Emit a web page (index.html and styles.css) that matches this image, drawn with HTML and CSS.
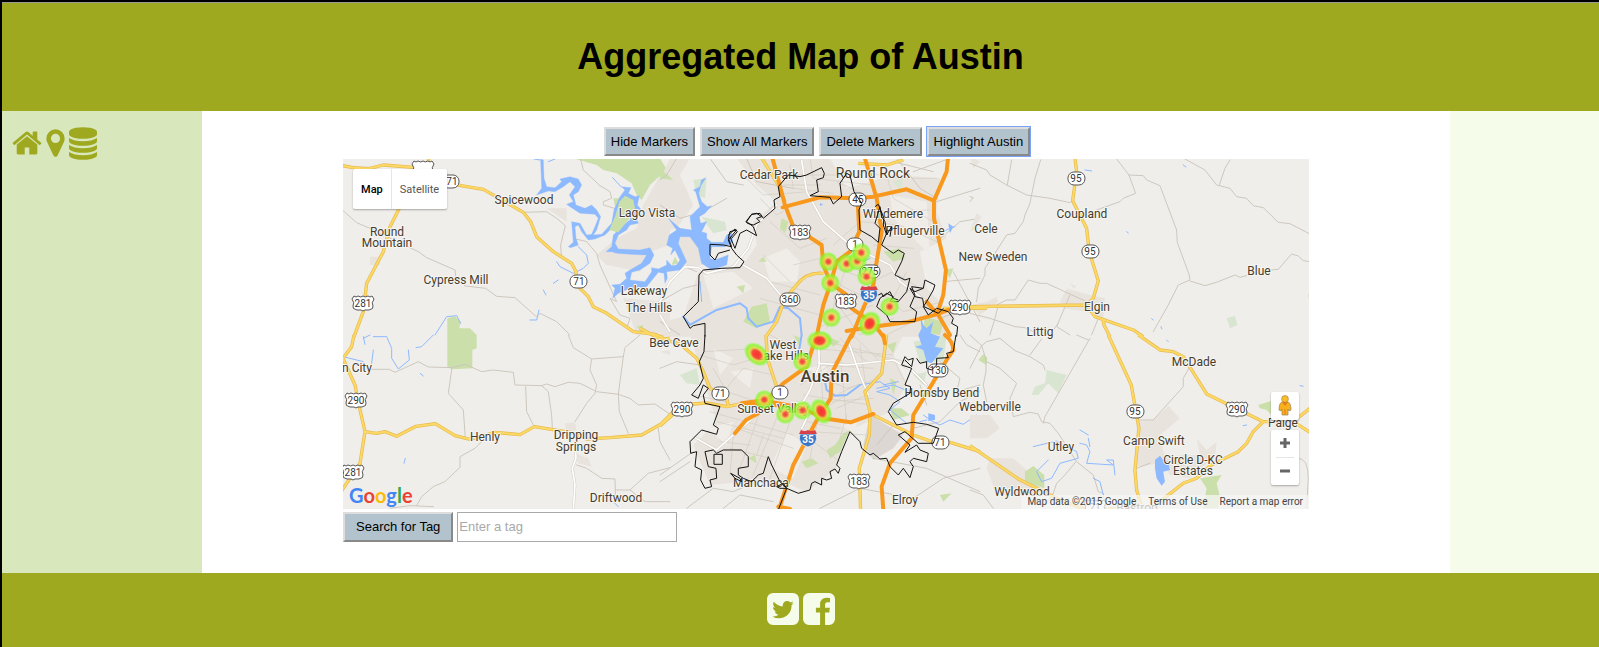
FILE: index.html
```html
<!DOCTYPE html>
<html lang="en">
<head>
<meta charset="utf-8">
<title>Aggregated Map of Austin</title>
<link rel="stylesheet" href="styles.css">
</head>
<body>
<div class="page">
<header class="header"><h1 class="title">Aggregated Map of Austin</h1></header>
<div class="columns">
  <nav class="sidebar" aria-label="Main">
    <a href="#home" aria-label="Home"><svg class="icon" width="30" height="32" viewBox="64 0 1664 1792"><path d="M1472 992v480q0 26-19 45t-45 19h-384v-384h-256v384h-384q-26 0-45-19t-19-45v-480q0-1 .5-3t.5-3l575-474 575 474q1 2 1 6zm223-69l-62 74q-8 9-21 11h-3q-13 0-21-7l-692-577-692 577q-12 8-24 7-13-2-21-11l-62-74q-8-10-7-23.5t11-21.5l719-599q32-26 76-26t76 26l244 204v-195q0-14 9-23t23-9h192q14 0 23 9t9 23v408l219 182q10 8 11 21.5t-7 23.5z"/></svg></a>
    <a href="#map" aria-label="Map"><svg class="icon" width="19" height="32" viewBox="384 0 1024 1792"><path d="M1152 640q0-106-75-181t-181-75-181 75-75 181 75 181 181 75 181-75 75-181zm256 0q0 109-33 179l-364 774q-16 33-47.5 52t-67.5 19-67.5-19-46.5-52l-365-774q-33-70-33-179 0-212 150-362t362-150 362 150 150 362z"/></svg></a>
    <a href="#data" aria-label="Data"><svg class="icon" width="28" height="33" viewBox="128 0 1536 1792"><path d="M896 768q237 0 443-43t325-127v170q0 69-103 128t-280 93.5-385 34.5-385-34.5-280-93.5-103-128v-170q119 84 325 127t443 43zm0 768q237 0 443-43t325-127v170q0 69-103 128t-280 93.5-385 34.5-385-34.5-280-93.5-103-128v-170q119 84 325 127t443 43zm0-384q237 0 443-43t325-127v170q0 69-103 128t-280 93.5-385 34.5-385-34.5-280-93.5-103-128v-170q119 84 325 127t443 43zm0-1152q208 0 385 34.5t280 93.5 103 128v128q0 69-103 128t-280 93.5-385 34.5-385-34.5-280-93.5-103-128v-128q0-69 103-128t280-93.5 385-34.5z"/></svg></a>
  </nav>
  <main class="main">
    <div class="toolbar">
      <button type="button" class="btn">Hide Markers</button>
      <button type="button" class="btn">Show All Markers</button>
      <button type="button" class="btn">Delete Markers</button>
      <button type="button" class="btn btn-active">Highlight Austin</button>
    </div>
    <section class="map" aria-label="Map of Austin">
<svg class="canvas" viewBox="0 0 966 350" preserveAspectRatio="xMidYMid slice">
<defs>
<radialGradient id="heat"><stop offset="0" stop-color="#f23c3c"/><stop offset=".2" stop-color="#f4583e" stop-opacity=".95"/><stop offset=".42" stop-color="#e6dc46" stop-opacity=".85"/><stop offset=".64" stop-color="#a6f03c" stop-opacity=".8"/><stop offset=".78" stop-color="#7dfa1e" stop-opacity=".75"/><stop offset="1" stop-color="#7dff1e" stop-opacity="0"/></radialGradient>
<radialGradient id="hot"><stop offset="0" stop-color="#fa3030"/><stop offset=".34" stop-color="#f84434" stop-opacity=".95"/><stop offset=".54" stop-color="#dce03c" stop-opacity=".85"/><stop offset=".78" stop-color="#7dfa1e" stop-opacity=".8"/><stop offset="1" stop-color="#7dff1e" stop-opacity="0"/></radialGradient>
<path id="us" d="M-9-7Q-7-5-5-7-2-5 0-7 2-5 5-7 7-5 9-7L11-4Q8 0 10 3 11 6 6 7H2L0 8-2 7H-6Q-11 6-10 3-8 0-11-4Z"/>
<g id="interstate"><path fill="#3a76c4" stroke="#fff" stroke-width=".7" d="M-8-4H8Q11 6 0 9-11 6-8-4Z"/><path fill="#d8414a" d="M-7-8Q-3-6 0-8 3-6 7-8L9-4H-9Z"/></g>
<g id="yellow">
<path transform="translate(-3 -4) scale(.33333)" d="M0 30Q40 42 90 40L130 30 220 37 262 28 270 0M340 88L430 103 550 172 572 200 590 245 640 290 695 325 708 350 710 390 745 425 760 455 800 475 880 530 945 538 970 548M178 160L150 215 130 290 80 385 70 470 42 545"/>
<path transform="translate(-3 176) scale(.33333)" d="M42 0L35 35 9 70 45 150 60 225 75 290 60 385 30 430 0 475M75 290L110 295 135 290 170 304 228 274 286 266 345 302 390 313 465 292 540 299 583 275 690 292 740 312 810 308 905 300 962 268 1000 230M900-20L960 12 990 10"/>
<path transform="translate(317 -4) scale(.33333)" d="M300 0L355 90 375 140M490 355Q440 350 410 390L375 430 350 500 318 545M595 25L680 30 730 15M850 460H980"/>
<path transform="translate(317 176) scale(.33333)" d="M318 0L322 70 350 155 330 205M0 273L65 215 100 207 140 204 200 215 250 205M0 15Q60 20 75 40L110 70 130 110 150 160 200 190 205 215M680 0L665 115 615 170 630 230 628 300 598 400 602 530M640 240L760 300 830 325 870 322 960 350"/>
<path transform="translate(627 -4) scale(.33333)" d="M314 0L320 50 308 137 350 220 358 290 385 378 370 430 350 450 0 455M350 450L375 485 490 525 520 545M400 495L402 510 420 545"/>
<path transform="translate(627 176) scale(.33333)" d="M415 0L484 150 507 280 495 405 500 465 520 530M505 0L570 45 610 50 640 65 710 177 880 260 850 290 830 325 805 350 720 392 680 430 640 445 570 500 530 530M880 260H970L1020 292M970 260L1020 220M0 332L145 432 260 490 350 525 440 522 520 530"/>
</g>
</defs>
<rect width="966" height="350" fill="#f0eeea"/>
<g class="tile" transform="translate(-3 -4) scale(.33333)">
<path class="urban" d="M960 62L990 75V270L930 290 900 350 800 330 770 300 830 250 890 220 910 150ZM90 305H120V330H90ZM620 160L680 160 680 200ZM850 430L990 440V530L890 540Z"/>
<path class="park" d="M700 10L960 10 985 50 985 75 960 62 930 90 905 135 890 120 875 85 860 75 830 55 790 45 770 30ZM820 130L870 130 885 160 860 195 830 232 808 222 830 180ZM322 540V490L345 484 362 500 358 520 390 520 410 540ZM890 515L910 510 905 530Z"/>
<path class="minor" d="M9 167L50 203 90 220 235 290 260 308 345 345 347 365 375 393 437 400 470 424 525 428 590 486 600 475 650 500 690 540M550 172L620 170 650 190 676 212 662 270 664 300M722 13L730 45 780 92 810 110 815 130 790 140 790 150 840 165M700 250L740 260 770 295 780 330 830 440 810 430 840 480 870 490 860 520 880 530"/>
<path class="creek" d="M285 540L320 485 350 482 362 505M650 320L660 335 700 355 730 340 745 325 740 300 715 275M570 495L590 495 597 465M640 385L655 375M610 405L618 420"/>
</g>
<g class="tile" transform="translate(-3 176) scale(.33333)">
<path class="park" d="M322 0H410V40L397 45V100L336 103 322 95Z"/>
<path class="urban" d="M675 265L705 262 710 285 680 290ZM705 355L745 370 755 395 715 385ZM960 50L990 45V60Z"/>
<path class="minor" d="M95 103H148L165 112 235 80 265 96 336 98 376 88 425 110 458 105 520 112 525 150 605 152 620 147 645 155 685 142 720 145 770 170 835 178 870 190 895 210 945 207 990 238M336 98L325 175 370 225 376 310M557 155L560 230 580 270M605 152L625 170 635 240 637 280M685 0L700 38 755 72 750 105 770 150 765 175 740 205 705 260M755 72L850 65 835 178 838 230 865 295M850 65L855 38 900 0M425 320L405 340 360 365V397L315 440 280 455 245 485 230 512M150 520L210 512 280 515M710 390L740 400 785 430 825 432 827 500M830 465H870L925 415 990 398M870 465L915 500H990M955 280L960 320 990 375"/>
<path class="creek" d="M70 10L90 0M100 5H140L155 40 155 70 175 102 208 75 205 45M75 28L70 5M9 65L70 80M100 45L95 85M192 385L196 370M228 38L245 35 280 0M240 115L250 123M820 500L835 515"/>
<path class="white-edge" d="M705 310L708 370 697 400 705 450 700 525"/><path class="white" d="M705 310L708 370 697 400 705 450 700 525"/>
</g>
<g class="tile" transform="translate(317 -4) scale(.33333)">
<path class="urban" d="M230 10H510L560 100 700 60 840 70 830 170 860 250 780 290 800 400 880 480 860 545H0L10 500 70 485 115 350 250 330 290 270 280 200 350 140 290 90ZM0 75L30 10H90L60 60 100 150 50 220 0 230ZM45 245L105 240 140 280 150 325 80 340 70 300Z"/>
<path class="pale" d="M380 280L420 320 410 380 330 380 310 310ZM130 360L220 350 280 400 160 460ZM690 120L800 140 810 300 700 190Z"/>
<path class="park" d="M0 40L40 75 0 70ZM275 455L320 445 330 500 290 520 250 500ZM365 190L385 200 375 235 360 220ZM310 305L320 320 295 320ZM670 290L720 280 735 310 700 320ZM795 485L850 500 840 540 790 530ZM540 420L560 410 565 440ZM855 345L880 340 870 370ZM230 395L255 390 250 415ZM45 305L55 325 35 330Z"/>
<path class="pale-green" d="M100 75L140 70 135 130 110 120ZM125 185L195 200 200 225 160 235ZM700 80L730 70 720 105Z"/>
<path class="street" d="M300 130L350 180 370 170M240 50L310 120 450 110M390 30L400 100 520 115M450 10L460 70 640 90M360 60H540M370 90H480M530 80L640 130 680 120M600 50L720 70 830 70M650 170L810 165M680 60L700 130 820 200M600 200L720 210 830 260M520 270L600 200M400 330L480 310M330 200L420 280 500 250M310 300L390 380M330 380L480 420M530 340L640 380 700 350 780 400M540 390L620 430M560 330L500 520M650 400L730 470 850 440M640 270L760 280M740 350L700 430M300 430L480 480M470 520L640 450M520 430L600 540M600 540L700 490M680 540L800 480"/>
<path class="minor" d="M0 150L60 190 130 170 200 130M50 10L20 60 0 75M150 10L200 80 250 90M0 350L60 330 110 350M0 500L60 540M260 10L290 80 400 100M760 50L870 10M830 140L960 100M830 260L900 200 960 190M850 380L960 370M700 20L820 50M710 10L780 100 830 130M0 440L70 400 110 390M840 490L920 460M880 350L960 500"/>
<path class="river" d="M70 485L90 510 170 465 240 445 260 460 265 490 290 515 340 500 360 455 385 460 420 490 425 540"/>
<path fill="#8db9ff" d="M865 205L880 215 870 235ZM480 145L490 148 480 153Z"/>
<path class="creek" d="M850 230L870 220 885 215M125 440L120 380M630 310L610 320"/>
<path class="white-edge" d="M425 15L440 110 490 200 570 270 690 330 720 380 800 440M0 480L30 530M0 440L30 380 75 335 115 338 140 355 220 335 265 280 290 210 350 150M250 330L320 370 370 430"/><path class="white" d="M425 15L440 110 490 200 570 270 690 330 720 380 800 440M0 480L30 530M0 440L30 380 75 335 115 338 140 355 220 335 265 280 290 210 350 150M250 330L320 370 370 430"/>
</g>
<g class="tile" transform="translate(187 -4) scale(.33333)">
<path fill="#8db9ff" stroke="#8db9ff" stroke-width="1" d="M32 12L40 15 42 70 50 95 75 98 95 80 90 72 120 65 145 72 155 90 145 110 130 120 138 150 165 160 185 150 200 165 212 185 200 225 190 240 215 238 245 205 252 165 270 125 285 105 275 95 303 98 295 115 315 125 328 122 322 150 335 165 318 185 325 205 300 210 290 225 265 240 255 265 265 282 330 285 360 278 372 300 360 325 330 345 305 352 300 375 345 380 365 350 365 338 385 342 410 330 410 315 425 332 440 330 450 315 435 285 422 300 428 280 410 270 418 240 440 225 415 190 450 220 485 225 480 185 495 170 510 155 497 110 490 105 510 95 514 75 528 68 514 90 506 115 515 140 532 155 545 152 525 175 508 185 512 205 530 200 515 230 530 235 530 250 545 262 580 262 590 240 605 235 608 262 585 275 545 275 540 310 555 315 595 300 590 330 545 345 515 325 505 280 480 245 450 245 445 265 470 320 450 345 410 350 412 370 405 385 402 355 385 352 350 395 320 402 300 400 265 415 248 430 255 400 245 390 270 388 290 370 285 355 300 345 335 325 350 300 300 298 260 295 245 290 228 290 245 275 250 240 280 210 300 195 305 170 300 140 290 125 270 155 262 190 245 220 225 240 195 252 175 255 155 230 145 210 135 215 138 250 145 270 122 278 115 275 130 262 125 200 150 205 170 240 185 238 195 215 205 190 195 178 150 175 120 155 110 148 130 140 118 120 135 95 120 80 100 95 75 110 55 108 20 120 35 100Z"/>
<path class="park" d="M268 140L285 122 310 135 315 160 295 195 265 232 238 225 255 185Z"/>
<path class="creek" d="M275 97L248 68M12 12L30 15M55 20L75 12"/>
</g>
<g class="tile" transform="translate(317 176) scale(.33333)">
<path class="urban" d="M90 0H730L700 60 740 150 690 230 560 290 530 400 440 470 370 440 250 440 150 450 100 330 170 260 130 130Z"/>
<path fill="#dcd7d2" d="M630 240L730 300 700 340 640 375 610 330Z"/>
<path class="pale" d="M160 40L220 70 180 120ZM210 110L280 100 270 160ZM330 400L380 290 440 330 400 430ZM140 280L220 260 200 330ZM440 100L500 90 500 130ZM540 270L590 260 590 300Z"/>
<path class="pale-green" d="M60 120L110 100 120 150 80 145ZM760 20L860 0 850 80 780 80ZM760 120L800 110 790 150Z"/>
<path class="park" d="M500 345L525 330 550 295 570 285 540 350 510 370ZM425 380L455 370 475 385 440 400ZM490 0L540 20 520 35ZM265 370L285 360 290 385ZM680 30L710 20 700 55ZM690 220L725 220 750 240 700 255ZM690 130L710 140 700 180ZM400 0L425 10 415 30ZM840 480L875 475 850 500Z"/>
<path class="street" d="M150 230L400 300M170 260L370 310M230 280L400 340M300 230L240 400M350 250L280 420M390 260L330 430M210 340L330 370M120 60L220 90 320 60M190 170L250 100 340 120M480 90L640 100M450 40L700 60M480 60L490 220M540 50L560 260M600 30L620 170M420 100L560 160 660 130M500 200L640 190M430 180L630 210M450 290L620 300M470 270L450 370M560 240L540 310M700 70L740 150M640 60L740 80M460 320L540 380M130 50L300 40M160 100L200 170 290 200M420 150L540 70M510 190L590 150M530 220L620 180M460 240L560 180M440 260L540 280M330 0L410 40M500 20L660 60M540 10L620 80M580 0L660 80M100 180L200 200M220 300L210 420M180 320L270 330M310 300L290 360"/>
<path class="minor" d="M0 440L90 380M0 420L100 350M80 520L160 460 220 470 290 440M190 520L240 480 340 500M480 520L600 460 760 490 850 430 960 400M640 370L800 400 960 470M760 280L840 260 900 200 960 170M800 210L780 150M840 80L900 130 890 170 960 150M900 0L920 30 960 50M0 100L50 80 120 90M700 270L650 330"/>
<path class="creek" d="M790 240L815 258 840 270 870 255 910 268 950 240M780 260L800 255M650 160L700 150 750 170M670 150L715 140"/>
<path class="creek" d="M600 150L660 140 690 160 650 170 690 180 720 200 690 225 740 265"/>
<path class="river" d="M425 0L415 60M495 140L500 165 525 182 560 180 600 150"/>
<path fill="#8db9ff" d="M780-60L790-30 800-20 820-40 812-5 840 5 825 35 850 40 815 85 800 80 790 45 765 35 785 30 775 0 785-20ZM805 235L825 240 825 255 805 258Z"/>
<path class="white-edge" d="M475 0L478 90 450 165 430 200 385 210M475 85L560 90 700 75 755 105 800 150M565 20L600 120 625 180M105 308L170 345 228 292 290 240M445 240L425 280"/><path class="white" d="M475 0L478 90 450 165 430 200 385 210M475 85L560 90 700 75 755 105 800 150M565 20L600 120 625 180M105 308L170 345 228 292 290 240M445 240L425 280"/>
</g>
<g class="tile" transform="translate(627 -4) scale(.33333)">
<path class="urban" d="M0 0L30 20 10 40ZM0 230L20 175 35 185 10 225ZM290 400L360 420 405 430 400 490 350 470 280 460 270 440ZM0 450L50 440 80 425 85 440 30 480ZM300 385L320 395 310 400ZM1014 415H1018V430H1014Z"/>
<path class="pale-green" d="M770 490L795 482 802 510 780 520Z"/>
<path class="minor" d="M0 25L50 45 60 60 110 90 170 120 240 130 300 143 308 137M125 15L112 90M212 15L195 70 185 120 180 145 165 180 160 200 135 235 110 240 75 295 45 340 45 360 25 400 20 440M380 165L450 140 460 130 497 115 477 60 440 12M477 60L520 62 530 75 570 92 620 225 622 262 658 360 660 375 625 390 595 450 550 530M660 378L705 392 740 382 795 360 810 367 830 362M905 345L925 343 965 297 985 303 1000 317 1020 320M645 12L705 45 740 90 780 100 800 125 830 130 850 152 880 158 925 202 960 206 1020 237M780 15L765 40 748 90M0 475L60 490 135 515 165 518 210 540M80 450L110 435H135L175 375 210 385 230 385 350 440M85 450L75 490 60 540M300 420L260 515 300 540M265 505L250 525M385 490L365 540M0 125L10 128 0 140"/>
<path class="creek" d="M345 45L365 48M470 230L475 234M640 30L648 36M545 491L550 495M573 515L576 522"/>
</g>
<g class="tile" transform="translate(627 176) scale(.33333)">
<path class="urban" d="M500 260L550 255 595 212 630 250 570 300 580 350 600 380 500 395ZM60 370L130 370 210 440 200 480 80 480 50 400ZM0 240L60 240 90 280 50 310 0 310ZM680 310L710 345 740 320 735 370 690 400 660 430 600 420 570 370 640 360 690 360Z"/>
<path class="park" d="M165 410L190 393 223 420 223 460 165 440ZM25 75L40 57 52 68 50 90ZM690 430L755 420 740 445 750 485 745 520H700L710 460ZM865 210L905 197V240L890 225 870 220Z"/>
<path class="pale-green" d="M230 105L290 120 265 175 235 145 205 180 185 180 195 155 225 145Z"/>
<path class="minor" d="M0 0L35 32 0 100M35 32L50 20 90 10 135 47 180 65 220 90 225 105M35 32L50 80 90 100 140 145 120 190 130 245 180 232 205 237 215 260 240 265 265 295 320 380 370 420 385 470 400 475 408 525M180 60L215 12M220 265L225 245 360 10M320 0L355 15M48 80V110L40 150 50 200M500 255L550 255 640 155 640 130 660 95M318 380L285 420 260 445 250 475 225 510M0 465L40 480 70 520M500 400L540 385M985 370Q1015 370 1015 430L1010 520"/>
<path class="creek" d="M190 335L260 318 320 350 325 370 270 385 245 430 215 440 200 410 235 375M330 285L355 300M330 325L350 330 360 350 350 385 430 390 410 375 430 375 435 420M370 430L390 440 400 480M360 335L355 310M590 15L595 20M990 152L1000 154M820 272L830 270M890 500L895 490"/>
<path fill="#8db9ff" d="M555 375L570 362 580 375 595 380 600 405 580 410 585 440 575 452 560 430 555 400Z"/>
</g>
<use href="#yellow" class="yellow-edge"/><use href="#yellow" class="yellow-line"/>
<g transform="translate(317 -4) scale(.33333)" class="orange">
<path d="M335 0L375 150 400 215 485 270 490 330 512 385 560 420 575 460M575 460L640 505 670 545M368 157L480 127 590 130 640 125 740 103 822 137M612 0L650 130 665 230 650 320 640 390 610 460 575 545M592 120L598 230 570 290 530 320 512 385 490 450 470 545M865 0L860 50 822 137V190L858 345 850 420 832 475 870 540M560 528L640 515 740 502 830 478 865 465M800 440L832 478"/>
</g>
<g transform="translate(317 176) scale(.33333)" class="orange">
<path d="M470 0L440 95 370 145 320 195 245 205M574 0L515 115 512 190 465 265 400 390 355 530M670 0L675 25M855 0Q880 20 880 45L860 75 760 240 755 310 690 385 665 455 670 525M330 200L430 220 490 250 572 262 640 237M225 295L258 255 295 235 310 215M250 205L340 210 420 215M355 515L390 522"/>
</g>
<g transform="translate(-343 -159)">
<g class="shield">
<use href="#us" x="423" y="168"/><use href="#us" x="363" y="303"/><use href="#us" x="356" y="400"/><use href="#us" x="353" y="472"/><use href="#us" x="800" y="232"/><use href="#us" x="846" y="301"/><use href="#us" x="859" y="481"/><use href="#us" x="960" y="307"/><use href="#us" x="682" y="409"/><use href="#us" x="1237" y="409"/><use href="#us" x="1095" y="507"/>
<rect x="442" y="175" width="17" height="13" rx="6"/><rect x="570" y="275" width="17" height="13" rx="6"/><rect x="780" y="293" width="20" height="13" rx="6"/><rect x="847" y="238" width="16" height="13" rx="6"/><rect x="849" y="193" width="17" height="13" rx="6"/><rect x="860" y="265" width="20" height="13" rx="6"/><rect x="712" y="387" width="17" height="13" rx="6"/><rect x="772" y="386" width="16" height="13" rx="6"/><rect x="928" y="364" width="20" height="13" rx="6"/><rect x="932" y="436" width="17" height="13" rx="6"/><rect x="1068" y="172" width="17" height="13" rx="6"/><rect x="1082" y="245" width="17" height="13" rx="6"/><rect x="1127" y="405" width="17" height="13" rx="6"/>
</g>
<use href="#interstate" x="869" y="294"/><use href="#interstate" x="808" y="438"/>
<g class="number">
<text x="363" y="307">281</text><text x="356" y="404">290</text><text x="353" y="476">281</text><text x="800" y="236">183</text><text x="846" y="305">183</text><text x="859" y="485">183</text><text x="960" y="311">290</text><text x="682" y="413">290</text><text x="1237" y="413">290</text><text x="452" y="185">71</text><text x="579" y="285">71</text><text x="790" y="303">360</text><text x="855" y="248">1</text><text x="858" y="203">45</text><text x="870" y="275">275</text><text x="720" y="397">71</text><text x="780" y="396">1</text><text x="938" y="374">130</text><text x="940" y="446">71</text><text x="1076" y="182">95</text><text x="1090" y="255">95</text><text x="1135" y="415">95</text><text x="1095" y="511">21</text>
<text class="number-light" x="869" y="299">35</text><text class="number-light" x="808" y="443">35</text>
</g>
<g class="label">
<text x="524" y="204">Spicewood</text><text x="387" y="236">Round</text><text x="387" y="247">Mountain</text><text x="647" y="217">Lago Vista</text><text x="456" y="284">Cypress Mill</text><text x="644" y="295">Lakeway</text><text x="649" y="312">The Hills</text><text x="674" y="347">Bee Cave</text><text x="357" y="372">n City</text><text x="485" y="441">Henly</text><text x="576" y="439">Dripping</text><text x="576" y="451">Springs</text><text x="616" y="502">Driftwood</text><text x="769" y="179">Cedar Park</text><text class="label-town" x="873" y="178">Round Rock</text><text x="893" y="218">Windemere</text><text x="915" y="235">Pflugerville</text><text x="986" y="233">Cele</text><text x="993" y="261">New Sweden</text><text x="1082" y="218">Coupland</text><text x="1259" y="275">Blue</text><text x="1097" y="311">Elgin</text><text x="1040" y="336">Littig</text><text x="1194" y="366">McDade</text><text x="783" y="349">West</text><text x="783" y="360">Lake Hills</text><text class="label-city" x="825" y="382">Austin</text><text x="942" y="397">Hornsby Bend</text><text x="990" y="411">Webberville</text><text x="773" y="413">Sunset Valley</text><text x="761" y="487">Manchaca</text><text x="905" y="504">Elroy</text><text x="1061" y="451">Utley</text><text x="1154" y="445">Camp Swift</text><text x="1193" y="464">Circle D-KC</text><text x="1193" y="475">Estates</text><text x="1022" y="496">Wyldwood</text><text x="1283" y="427">Paige</text><text x="1137" y="512">Bastrop</text>
</g>
</g>
<g class="boundary" transform="translate(317 -4) scale(.33333)">
<path d="M135 545L135 505 100 512 90 520 70 485 100 455 115 440 117 360 130 345 185 340 240 338 252 320 230 300 215 280 205 255 230 225 210 230 205 250 215 275 190 270 150 268 150 300 165 315 175 295 210 285M210 245L225 280 240 235 260 225 290 242 280 215 260 200 275 178 300 175 310 190 345 160 342 135 360 125 355 95 385 60 420 65 440 60 485 38 493 55 490 68 470 75 475 110 450 122 510 127 520 147 545 125 540 85 560 55 570 60 582 110 605 145 597 165 600 225 635 245 655 262 660 220 645 205 660 155 665 185 675 200 680 235 665 270 700 295 715 285 733 295 725 320 705 360 735 375 750 370 740 410 715 440 690 440 700 425 680 415 660 430 650 455 680 480 690 500 765 500 770 470 750 455 765 420 755 395 790 400 795 375 825 390 820 405 800 440 790 455 805 480 830 460 865 470 880 490 875 505 893 515 890 545"/>
<path d="M258 200L275 178 290 175 305 185 290 190 300 200 280 210 262 205ZM205 240L225 222 232 230 215 250M645 155L655 148 660 160 672 190 670 210 680 240 695 215 690 245M790 400L765 410 750 400 765 425 788 430 792 455 835 475 850 460M655 420L665 415 670 425 690 410 700 430 715 435"/>
</g>
<g class="boundary" transform="translate(317 176) scale(.33333)">
<path d="M135 0L132 50 118 80 130 130 120 150 95 180 115 190 130 150 145 160 130 180 135 205 180 215 160 270 175 280 170 298 125 285 90 320 92 355 110 350 105 395 125 405 122 435 135 460 155 455 150 435 170 430 168 400 145 395 135 350 160 345 170 355 190 345 245 345 265 365 265 395 235 400 235 420 250 430 275 440 295 420 310 415 325 365 335 390 360 440 380 460 415 475 450 465 455 445 465 440 485 450 485 430 500 435 515 430 510 410 525 402 535 415 540 400 530 390 545 350 570 290 600 320 605 340 630 360 640 355 660 372 680 370 690 395 715 420 730 400 750 428 760 395 750 380 760 370 800 380 805 355 780 345 770 330 735 352 750 330 715 300 735 290 775 325 820 325 836 280 800 268 760 262 710 270 685 230 700 205 750 175 752 155 735 150 755 100 725 90 735 65 745 75 760 70 755 95 735 75M770 70L780 85 800 80 800 100 815 105 830 90 830 70 865 68 860 55 880 50 888 0"/>
<path d="M162 358H187V388H162ZM212 415L240 430 245 440 225 430ZM350 455L370 445 380 460 360 460ZM355 525L380 460"/>
</g>
<g transform="translate(317 -4) scale(.33333)" fill="url(#heat)">
<circle cx="505" cy="320" r="30"/><circle cx="560" cy="326" r="30"/><circle cx="592" cy="318" r="30"/><circle cx="604" cy="293" r="30"/><circle cx="620" cy="365" r="30"/><circle cx="511" cy="384" r="30"/><circle cx="514" cy="488" r="30"/><circle cx="689" cy="455" r="30"/>
<ellipse fill="url(#hot)" cx="629" cy="506" rx="33" ry="40" transform="rotate(30 629 506)"/>
<g transform="translate(0 540)"><circle cx="427" cy="80" r="30"/><circle cx="313" cy="194" r="30"/><circle cx="376" cy="238" r="30"/><circle cx="428" cy="226" r="30"/><ellipse fill="url(#hot)" cx="479" cy="17" rx="40" ry="31"/><ellipse fill="url(#hot)" cx="290" cy="58" rx="43" ry="31" transform="rotate(40 290 58)"/><ellipse fill="url(#hot)" cx="484" cy="229" rx="42" ry="30" transform="rotate(60 484 229)"/></g>
</g>
</svg>
      <div class="map-type"><button type="button" class="type type-on">Map</button><button type="button" class="type">Satellite</button></div>
      <a href="#google" class="logo" aria-label="Google"><span class="g-blue">G</span><span class="g-red">o</span><span class="g-yellow">o</span><span class="g-blue">g</span><span class="g-green">l</span><span class="g-red">e</span></a>
      <div class="controls">
        <button type="button" class="pegman" aria-label="Street View"><svg width="14" height="22" viewBox="0 0 14 22"><path fill="#f8b01c" stroke="#9a8357" stroke-width=".7" d="M4 7Q1 8 1 15L3 16 4 14V20H10V14L11 16 13 15Q13 8 10 7Z"/><circle cx="7" cy="4" r="3.4" fill="#fbbd27" stroke="#a98840" stroke-width=".7"/><path fill="#e47d18" d="M4 7H10L7 11ZM6.500 14h1v6h-1z"/></svg></button>
        <div class="zoom"><button type="button" class="zoom-btn" aria-label="Zoom in"><svg width="12" height="12" viewBox="0 0 12 12"><path fill="#666" d="M1 4.500H4.500V1H7.500V4.500H11V7.500H7.500V11H4.500V7.500H1Z"/></svg></button><button type="button" class="zoom-btn zoom-out" aria-label="Zoom out"><svg width="12" height="12" viewBox="0 0 12 12"><path fill="#666" d="M1 4.500H11V7.500H1Z"/></svg></button></div>
      </div>
      <div class="credits"><span>Map data ©2015 Google</span><a href="#terms">Terms of Use</a><a href="#report">Report a map error</a></div>
    </section>
    <form class="search"><button type="button" class="btn btn-search">Search for Tag</button><input class="tag" type="text" placeholder="Enter a tag" aria-label="Enter a tag"></form>
  </main>
  <aside class="aside"></aside>
</div>
<footer class="footer">
  <a href="#twitter" aria-label="Twitter"><svg class="social" width="32" height="32" viewBox="128 128 1536 1536"><path d="M1408 610q-56 25-121 34 68-40 93-117-65 38-134 51-61-66-153-66-87 0-148.500 61.500t-61.500 148.500q0 29 5 48-129-7-242-65t-192-155q-29 50-29 106 0 114 91 175-47-1-100-26v2q0 75 50 133.500t123 72.500q-29 8-51 8-13 0-39-4 21 63 74.500 104t121.500 42q-116 90-261 90-26 0-50-3 148 94 322 94 112 0 210-35.500t168-95 120.500-137 75-162 24.500-168.500q0-18-1-27 63-45 105-109zm256-194v960q0 119-84.500 203.500t-203.500 84.500h-960q-119 0-203.500-84.500t-84.500-203.500v-960q0-119 84.500-203.500t203.500-84.500h960q119 0 203.500 84.500t84.500 203.500z"/></svg></a>
  <a href="#facebook" aria-label="Facebook"><svg class="social" width="32" height="32" viewBox="128 128 1536 1536"><path d="M1376 128q119 0 203.500 84.500t84.500 203.500v960q0 119-84.500 203.500t-203.500 84.500h-188v-595h199l30-232h-229v-148q0-56 23.500-84t91.500-28l122-1v-207q-63-9-178-9-136 0-217.500 80t-81.500 226v171h-200v232h200v595h-532q-119 0-203.500-84.500t-84.500-203.500v-960q0-119 84.500-203.500t203.500-84.500h960z"/></svg></a>
</footer>
</div>
</body>
</html>
```
FILE: styles.css
```css
* { box-sizing: border-box; }
body { margin: 0; font-family: "Liberation Sans", Arial, sans-serif; font-size: 13px; color: #000; }
button, input { font: inherit; margin: 0; }
svg { display: block; }
.page { min-height: 100vh; display: flex; flex-direction: column; border-top: 2px solid #000; border-left: 2px solid #000; }
.header { border-top: 1px solid #999; background: #9fa91f; padding: 32px 0; text-align: center; }
.title { margin: 0; font-size: 36px; line-height: 44px; font-weight: bold; }
.columns { flex: 1; display: grid; grid-template-columns: 200fr 1248fr 149fr; background: #fff; }
.sidebar { background: #d9e8bc; padding: 16px 10px; display: flex; align-items: flex-start; gap: 4px; }
.icon { fill: #9fa91f; }
.main { display: flex; flex-direction: column; align-items: center; gap: 3px; padding-top: 16px; }
.aside { background: #f5fcea; }
.toolbar { display: flex; gap: 5px; padding-right: 18px; }
.btn { height: 29px; padding: 0 5px; border: 2px outset #ddd; background: #b2c3ce; color: #000; white-space: nowrap; }
.btn-active { outline: 1px solid #7aa3f5; }
.map { position: relative; width: 77.4%; aspect-ratio: 966 / 350; overflow: hidden; font-family: Roboto, sans-serif; }
.canvas { width: 100%; height: 100%; }
.tile path { stroke-linejoin: round; stroke-linecap: round; }
.urban { fill: #e8e3dc; }
.pale { fill: #f0ede8; }
.park { fill: #cadfaa; }
.pale-green { fill: #d8e5d0; }
.minor { fill: none; stroke: #cdc7be; stroke-width: 3; }
.street { fill: none; stroke: #d2cbc2; stroke-width: 2; }
.creek { fill: none; stroke: #8db9ff; stroke-width: 3; }
.river { fill: none; stroke: #8db9ff; stroke-width: 6; }
.white-edge { fill: none; stroke: #d3cdc4; stroke-width: 8; }
.white { fill: none; stroke: #fff; stroke-width: 5; }
.yellow-edge { fill: none; stroke: #e6b94f; stroke-width: 10; stroke-linejoin: round; }
.yellow-line { fill: none; stroke: #fcd965; stroke-width: 6; stroke-linejoin: round; }
.orange { fill: none; stroke: #f8981d; stroke-width: 12; stroke-linejoin: round; stroke-linecap: round; }
.boundary { fill: none; stroke: #111; stroke-width: 3; }
.shield { fill: #fff; stroke: #555; stroke-width: 1; }
.number { fill: #333; font-size: 10px; text-anchor: middle; }
.number-light { fill: #fff; font-weight: bold; }
.label { fill: #453d2f; font-size: 12px; text-anchor: middle; paint-order: stroke; stroke: #f7f5f1; stroke-width: 2px; stroke-linejoin: round; }
.label-town { font-size: 14px; }
.label-city { font-size: 17px; font-weight: 500; }
.map-type { position: absolute; top: 10px; left: 10px; display: flex; background: #fff; border-radius: 2px; box-shadow: 0 1px 2px rgba(0, 0, 0, .3); }
.type { height: 40px; padding: 0 8px; border: 0; background: none; color: #565656; font-size: 11px; }
.type-on { color: #000; font-weight: 500; border-right: 1px solid #e6e6e6; }
.logo { position: absolute; left: 6px; bottom: 0; font-family: Lato, sans-serif; font-size: 20px; line-height: 27px; font-weight: bold; text-decoration: none; }
.g-blue { color: #4285f4; }
.g-red { color: #ea4335; }
.g-yellow { color: #fbbc05; }
.g-green { color: #34a853; }
.controls { position: absolute; right: 10px; bottom: 24px; display: flex; flex-direction: column; gap: 10px; }
.pegman, .zoom { width: 28px; background: #fff; border: 0; border-radius: 2px; box-shadow: 0 1px 2px rgba(0, 0, 0, .3); padding: 0 5px; }
.pegman { height: 28px; display: grid; place-items: center; }
.zoom-btn { width: 18px; height: 27px; padding: 0; border: 0; background: none; display: grid; place-items: center; }
.zoom-out { height: 28px; border-top: 1px solid #e6e6e6; }
.credits { position: absolute; right: 0; bottom: 0; display: flex; gap: 12px; padding: 0 6px; background: rgba(245, 245, 245, .75); color: #444; font-size: 10px; line-height: 14px; white-space: nowrap; }
.credits a { color: inherit; text-decoration: none; }
.search { width: 77.4%; display: flex; gap: 4px; padding-bottom: 31px; }
.btn-search { height: 30px; padding: 0 11px; }
.tag { width: 220px; height: 30px; padding: 1px; border: 1px solid #a9a9a9; border-radius: 0; background: #fff; }
.tag::placeholder { color: #a9a9a9; opacity: 1; }
.footer { display: flex; justify-content: center; gap: 4px; padding: 20px 0 22px; background: #9fa91f; }
.social { fill: #f5fcea; }
```
